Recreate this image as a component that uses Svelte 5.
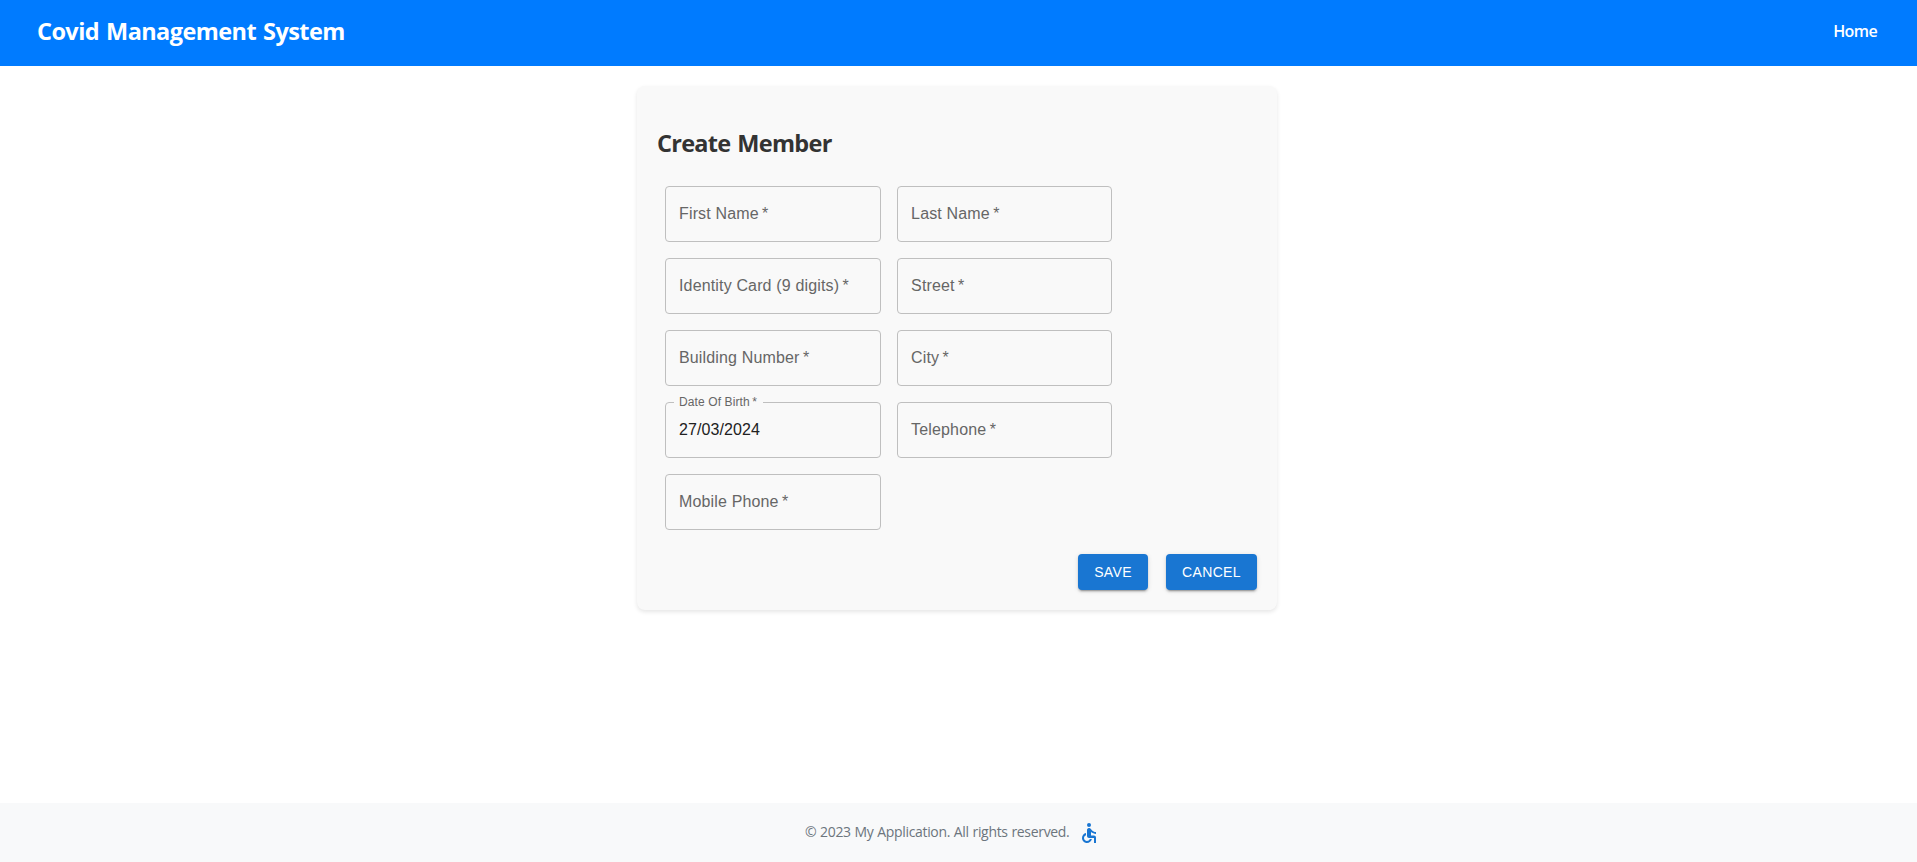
<script>
  const fields = [
    { label: 'First Name' },
    { label: 'Last Name' },
    { label: 'Identity Card (9 digits)' },
    { label: 'Street' },
    { label: 'Building Number' },
    { label: 'City' },
    { label: 'Date Of Birth', value: '27/03/2024' },
    { label: 'Telephone' },
    { label: 'Mobile Phone' }
  ];
</script>

<div class="page">
  <header>
    <h1>Covid Management System</h1>
    <nav><span class="link">Home</span></nav>
  </header>

  <main>
    <section class="card">
      <h2>Create Member</h2>
      <div class="grid">
        {#each fields as field}
          <div class="field">
            {#if field.value}
              <span class="floating">{field.label}&thinsp;*</span>
              <span class="value">{field.value}</span>
            {:else}
              <span class="label">{field.label}&thinsp;*</span>
            {/if}
          </div>
        {/each}
      </div>
      <div class="actions">
        <button class="save">SAVE</button>
        <button class="cancel">CANCEL</button>
      </div>
    </section>
  </main>

  <footer>
    <span class="copy">© 2023 My Application. All rights reserved.</span>
    <svg viewBox="0 0 24 24" width="24" height="24" fill="#1976d2" aria-hidden="true">
      <circle cx="12" cy="4" r="2" />
      <path d="M19 13v-2c-1.54.02-3.09-.75-4.07-1.83l-1.29-1.43c-.17-.19-.38-.34-.61-.45-.01 0-.01-.01-.02-.01H13c-.35-.2-.75-.3-1.19-.26C10.76 7.11 10 8.04 10 9.09V15c0 1.1.9 2 2 2h5v5h2v-5.5c0-1.1-.9-2-2-2h-3v-3.45c1.29 1.07 3.25 1.94 5 1.95zm-6.17 5c-.41 1.16-1.52 2-2.83 2-1.66 0-3-1.34-3-3 0-1.31.84-2.41 2-2.83V12.1c-2.28.46-4 2.48-4 4.9 0 2.76 2.24 5 5 5 2.42 0 4.44-1.72 4.9-4h-2.07z" />
    </svg>
  </footer>
</div>

<style>
  :global(body) {
    margin: 0;
    background: #fff;
  }
  .page {
    height: 862px;
    display: flex;
    flex-direction: column;
    font-family: 'Segoe UI', 'Open Sans', 'Noto Sans', sans-serif;
  }
  header {
    box-sizing: border-box;
    height: 66px;
    flex: none;
    display: flex;
    justify-content: space-between;
    align-items: center;
    padding: 0 40px 4px 37px;
    background: #007bff;
    color: #fff;
  }
  h1 {
    margin: 0;
    font-size: 23.5px;
    line-height: 32px;
    font-weight: 700;
    letter-spacing: -0.58px;
    word-spacing: 1.5px;
    white-space: nowrap;
  }
  .link {
    font-size: 16px;
    line-height: 24px;
    font-weight: 600;
    letter-spacing: -0.6px;
  }
  main {
    flex: 1;
    display: flex;
    justify-content: center;
    align-items: flex-start;
    padding: 20px 3px 0 0;
  }
  .card {
    box-sizing: border-box;
    width: 640px;
    height: 524px;
    padding: 20px;
    border-radius: 8px;
    background: #f9f9f9;
    box-shadow: 0 2px 4px rgba(0, 0, 0, 0.1);
  }
  h2 {
    margin: 21px 0 18px;
    font-size: 23.5px;
    line-height: 33px;
    font-weight: 700;
    letter-spacing: -0.72px;
    word-spacing: 1.5px;
    color: #333;
    white-space: nowrap;
  }
  .grid {
    display: grid;
    grid-template-columns: 215.6px 215.6px;
    gap: 16px;
    padding: 8px;
  }
  .field {
    box-sizing: border-box;
    position: relative;
    height: 56px;
    padding: 0 13px 2px;
    display: flex;
    align-items: center;
    border: 1px solid #bfbfbf;
    border-radius: 4px;
    font-family: Arial, 'Liberation Sans', sans-serif;
    font-size: 16px;
    line-height: 23px;
    letter-spacing: 0.15px;
    white-space: nowrap;
    color: #666;
  }
  .field:nth-child(even) {
    padding-left: 13.5px;
  }
  .value {
    color: #212121;
    letter-spacing: 0.1px;
  }
  .floating {
    position: absolute;
    left: 8px;
    top: -9px;
    padding: 0 6px 0 5px;
    background: #f9f9f9;
    font-size: 12px;
    line-height: 17px;
    letter-spacing: 0.11px;
  }
  .actions {
    display: flex;
    justify-content: flex-end;
    gap: 18px;
    margin-top: 16px;
  }
  button {
    height: 36px;
    padding: 0;
    border: 0;
    border-radius: 4px;
    background: #1976d2;
    color: #fff;
    font-family: Arial, 'Liberation Sans', sans-serif;
    font-size: 14px;
    font-weight: 500;
    line-height: 24px;
    letter-spacing: 0.35px;
    box-shadow:
      0 3px 1px -2px rgba(0, 0, 0, 0.2),
      0 2px 2px 0 rgba(0, 0, 0, 0.14),
      0 1px 5px 0 rgba(0, 0, 0, 0.12);
  }
  .save {
    width: 70px;
  }
  .cancel {
    width: 91px;
  }
  footer {
    box-sizing: border-box;
    height: 59px;
    flex: none;
    display: flex;
    align-items: center;
    gap: 7px;
    padding-left: 805px;
    background: #f8f9fa;
  }
  .copy {
    width: 265px;
    padding-bottom: 2px;
    font-size: 14px;
    line-height: 20px;
    letter-spacing: -0.32px;
    word-spacing: 0.4px;
    white-space: nowrap;
    color: #6c757d;
  }
</style>
